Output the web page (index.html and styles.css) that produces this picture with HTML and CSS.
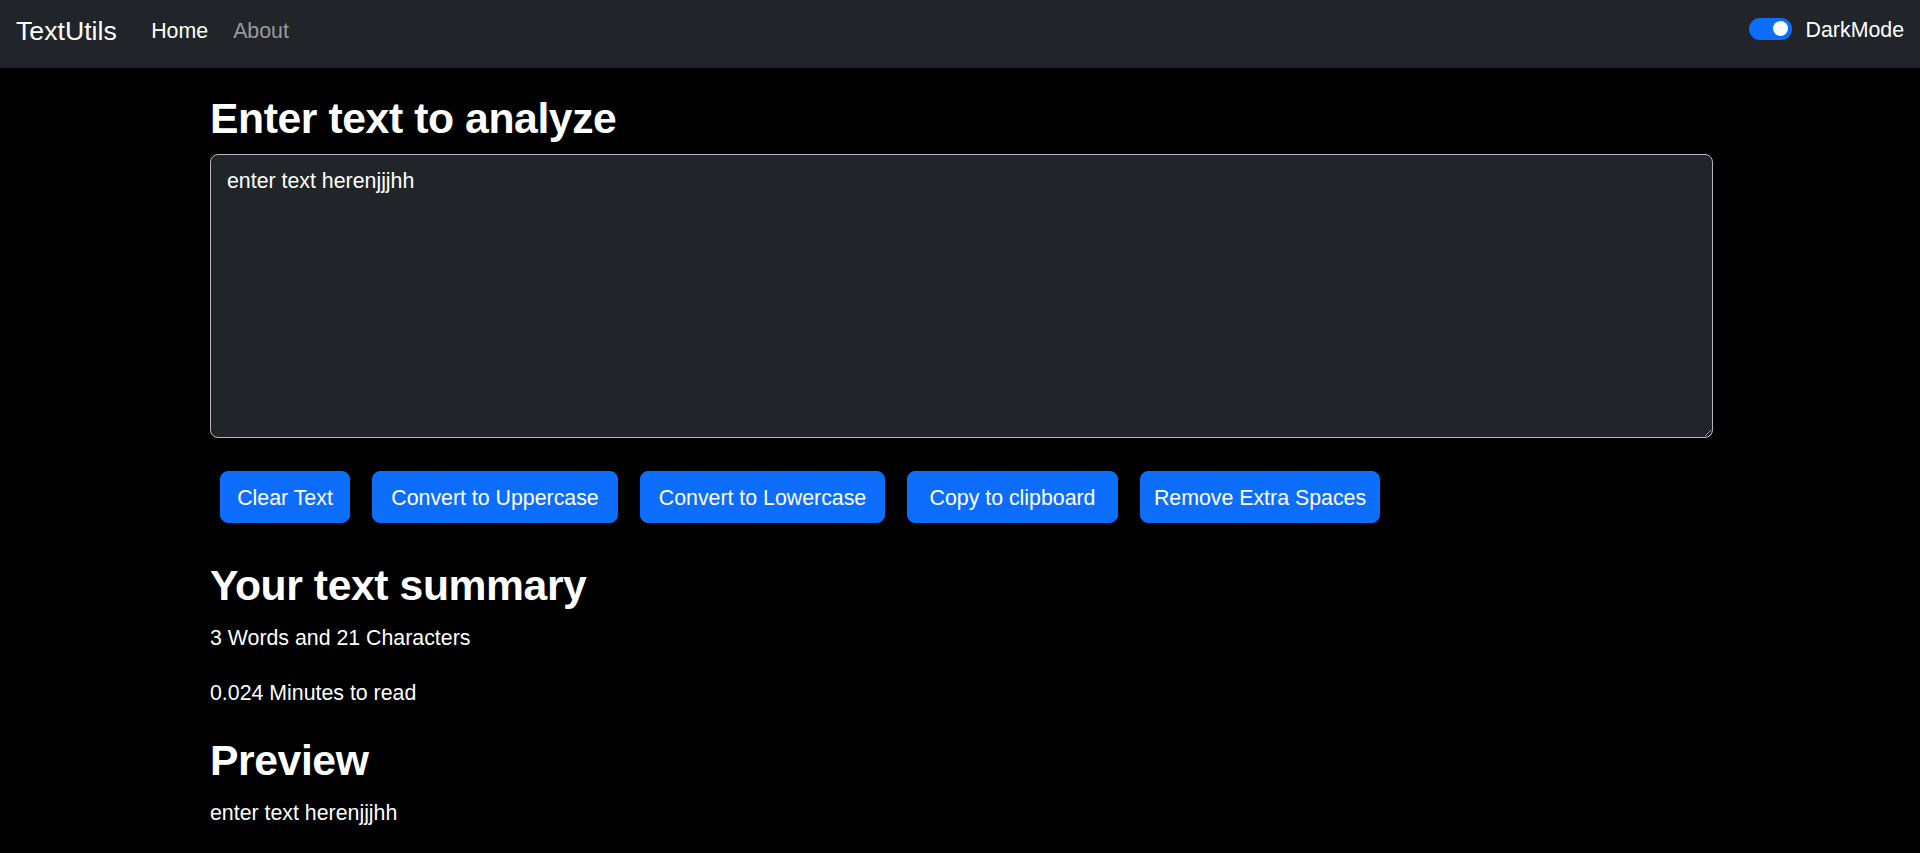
FILE: index.html
```html
<!DOCTYPE html>
<html lang="en">
<head>
<meta charset="utf-8">
<title>TextUtils</title>
<link rel="stylesheet" href="styles.css">
</head>
<body>
<nav class="navbar">
  <a class="brand" href="#">TextUtils</a>
  <ul class="nav-links">
    <li><a class="nav-link active" href="#">Home</a></li>
    <li><a class="nav-link" href="#">About</a></li>
  </ul>
  <div class="switch">
    <span class="switch-track"><span class="switch-knob"></span></span>
    <label class="switch-label">DarkMode</label>
  </div>
</nav>

<main class="container">
  <h1 class="title">Enter text to analyze</h1>
  <textarea class="text-input" rows="8">enter text herenjjjhh</textarea>
  <div class="actions">
    <button class="btn btn-clear">Clear Text</button>
    <button class="btn btn-upper">Convert to Uppercase</button>
    <button class="btn btn-lower">Convert to Lowercase</button>
    <button class="btn btn-copy">Copy to clipboard</button>
    <button class="btn btn-spaces">Remove Extra Spaces</button>
  </div>
  <h2 class="section summary-title">Your text summary</h2>
  <p class="stat words">3 Words and 21 Characters</p>
  <p class="stat minutes">0.024 Minutes to read</p>
  <h2 class="section preview-title">Preview</h2>
  <p class="stat preview">enter text herenjjjhh</p>
</main>
</body>
</html>
```
FILE: styles.css
```css
* { box-sizing: border-box; }
html, body { margin: 0; padding: 0; }
body {
  background: #000;
  color: #fff;
  font-family: "Liberation Sans", Arial, sans-serif;
  font-size: 21.33px;
  line-height: 32px;
  height: 853px;
  overflow: hidden;
}

.navbar {
  height: 68px;
  background: #212529;
  display: flex;
  align-items: center;
  padding: 0 16px 6px 16px;
}
.brand {
  color: #fff;
  text-decoration: none;
  font-size: 26.67px;
  line-height: 40px;
  margin-right: 22px;
}
.nav-links {
  list-style: none;
  margin: 0;
  padding: 0;
  display: flex;
  flex: 1;
}
.nav-link {
  display: block;
  padding: 0 12.5px;
  color: rgba(255, 255, 255, 0.55);
  text-decoration: none;
}
.nav-link.active { color: #fff; }

.switch {
  display: flex;
  align-items: center;
  gap: 14px;
  padding-bottom: 3px;
}
.switch-track {
  width: 43px;
  height: 22px;
  border-radius: 11px;
  background: #0d6efd;
  display: flex;
  align-items: center;
  justify-content: flex-end;
  padding-right: 3.5px;
  margin-bottom: 2px;
}
.switch-knob {
  width: 15px;
  height: 15px;
  border-radius: 50%;
  background: #fff;
}
.switch-label { color: #fff; }

.container {
  margin-left: 210px;
  width: 1503px;
}
.title {
  margin: 25px 0 10px;
  font-size: 42.67px;
  line-height: 51.2px;
  font-weight: 700;
  letter-spacing: -0.4px;
}
.text-input {
  display: block;
  width: 100%;
  height: 284px;
  margin: 0;
  padding: 10px 16px 8px;
  background: #212529;
  color: #fff;
  border: 1px solid #b4b8bc;
  border-radius: 8px;
  font-family: inherit;
  font-size: 21.33px;
  line-height: 32px;
  color-scheme: dark;
  outline: none;
  resize: vertical;
}
.actions {
  display: flex;
  gap: 22px;
  padding: 0 10px;
  margin-top: 33px;
}
.btn {
  background: #0d6efd;
  color: #fff;
  border: 1px solid #0d6efd;
  border-radius: 8px;
  font-family: inherit;
  font-size: 21.33px;
  line-height: 32px;
  padding: 10px 0 8px;
  height: 52px;
  text-align: center;
}
.btn-clear { width: 130px; }
.btn-upper { width: 246px; }
.btn-lower { width: 245px; }
.btn-copy { width: 211px; }
.btn-spaces { width: 240px; }

.section {
  font-size: 42.67px;
  line-height: 51.2px;
  font-weight: 700;
  letter-spacing: -0.4px;
  margin: 0;
}
.summary-title { margin-top: 37px; }
.stat { margin: 0; }
.words { margin-top: 11px; }
.minutes { margin-top: 23px; }
.preview-title { margin-top: 26px; }
.preview { margin-top: 10px; }
```
